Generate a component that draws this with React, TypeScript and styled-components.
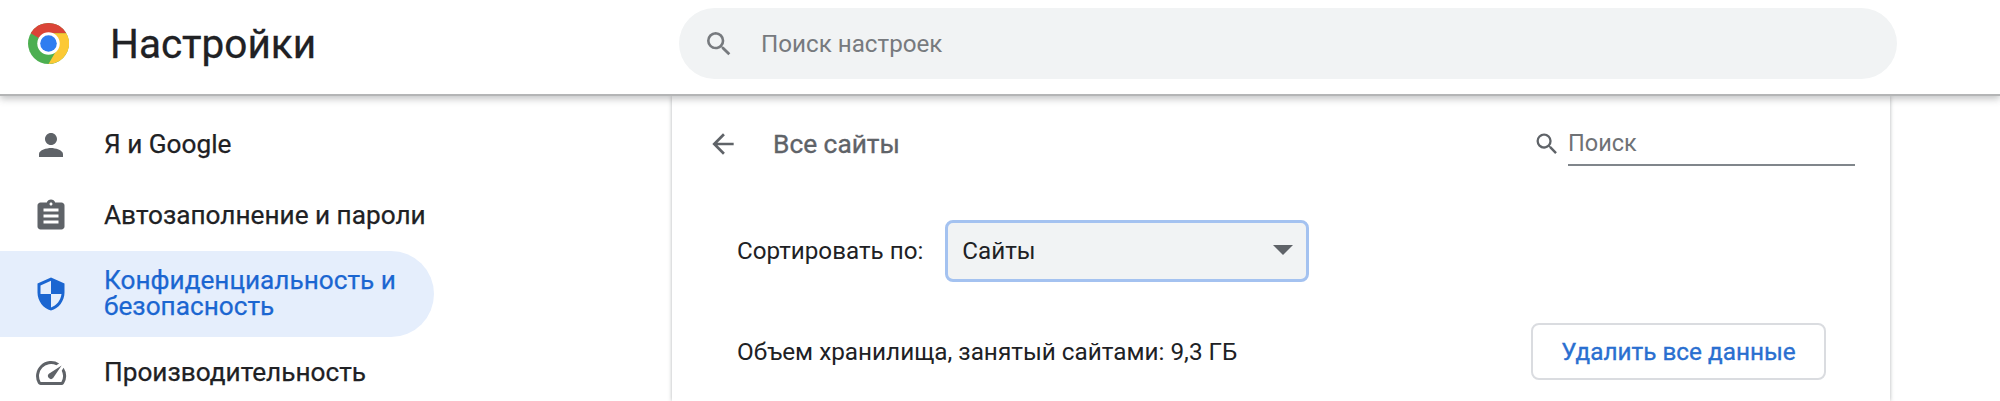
import React from 'react';
import styled, { createGlobalStyle } from 'styled-components';

const Global = createGlobalStyle`
  html, body { margin: 0; padding: 0; background: #fff; }
  body { font-family: Roboto, "Liberation Sans", sans-serif; }
  * { box-sizing: border-box; }
`;

const Page = styled.div`
  width: 2000px;
  height: 401px;
  overflow: hidden;
  background: #fff;
  display: flex;
  flex-direction: column;
`;
const Header = styled.header`
  position: relative;
  z-index: 2;
  height: 96px;
  flex: none;
  background: #fff;
  border-bottom: 2px solid #b4b5b6;
  box-shadow: 0 3px 7px rgba(60, 64, 67, 0.3);
  display: flex;
  align-items: flex-start;
  padding-top: 8px;
`;
const Brand = styled.div`
  width: 679px;
  height: 71px;
  flex: none;
  padding-left: 28px;
  display: flex;
  align-items: center;
  gap: 41px;
`;
const Title = styled.h1`
  margin: 0;
  font-size: 40.5px;
  font-weight: 400;
  line-height: 44px;
  color: #202124;
  -webkit-text-stroke: 0.3px #202124;
`;
const SearchBar = styled.div`
  width: 1218px;
  height: 71px;
  border-radius: 36px;
  background: #f1f3f4;
  display: flex;
  align-items: center;
  padding-left: 24px;
  gap: 26px;
  font-size: 24.2px;
  color: #777a7e;
`;
const Body = styled.div`
  flex: 1;
  display: flex;
  min-height: 0;
`;
const Sidebar = styled.nav`
  width: 672px;
  flex: none;
  padding-top: 13px;
`;
const NavRow = styled.div<{ $active?: boolean }>`
  width: 434px;
  height: ${p => (p.$active ? 86 : 71)}px;
  display: flex;
  align-items: center;
  gap: 35px;
  padding-left: 33px;
  border-radius: 0 43px 43px 0;
  background: ${p => (p.$active ? '#e5eefc' : 'transparent')};
  color: ${p => (p.$active ? '#1b66d1' : '#202124')};
  font-size: 26.2px;
  font-weight: 400;
  -webkit-text-stroke: 0.25px currentColor;
  line-height: 26px;
`;
const NavIcon = styled.svg`
  width: 36px;
  height: 36px;
  flex: none;
  fill: currentColor;
  stroke: none;
`;
const NavLabel = styled.span`
  padding-bottom: 2px;
`;
const Grey = styled.span`
  display: flex;
  color: #5f6368;
`;
const Card = styled.main`
  width: 1218px;
  flex: none;
  background: #fff;
  box-shadow: 0 0 4px rgba(60, 64, 67, 0.4);
  padding: 0 35px 0 65px;
`;
const SubHeader = styled.div`
  height: 96px;
  display: flex;
  align-items: center;
  color: #5f6368;
`;
const Back = styled.svg`
  width: 32px;
  height: 32px;
  fill: #5f6368;
  margin-left: -30px;
`;
const SubTitle = styled.h2`
  margin: 0 0 0 34px;
  font-size: 26.3px;
  font-weight: 400;
  -webkit-text-stroke: 0.35px #5f6368;
  flex: 1;
`;
const MiniSearch = styled.div`
  display: flex;
  align-items: center;
  gap: 7px;
`;
const MiniInput = styled.div`
  width: 287px;
  height: 44px;
  border-bottom: 2px solid #80868b;
  font-size: 23.5px;
  line-height: 42px;
  color: #6f7276;
`;
const SortRow = styled.div`
  display: flex;
  align-items: center;
  gap: 22px;
  margin-top: 28px;
  font-size: 24.2px;
  color: #202124;
`;
const Select = styled.div`
  width: 364px;
  height: 62px;
  border: 3px solid #a4c2f0;
  border-radius: 8px;
  background: #f1f3f4;
  display: flex;
  align-items: center;
  justify-content: space-between;
  padding: 0 13px 0 14px;
`;
const Caret = styled.span`
  width: 0;
  height: 0;
  border-left: 10px solid transparent;
  border-right: 10px solid transparent;
  border-top: 10px solid #5f6368;
  margin-top: -3px;
`;
const StorageRow = styled.div`
  display: flex;
  align-items: center;
  margin-top: 41px;
  font-size: 24.3px;
  color: #202124;
`;
const StorageText = styled.span`
  flex: 1;
`;
const Action = styled.button`
  width: 295px;
  height: 57px;
  margin-right: 29px;
  background: #fff;
  border: 2px solid #dadce0;
  border-radius: 8px;
  color: #2a6fd0;
  font: 400 24.3px Roboto, sans-serif;
  -webkit-text-stroke: 0.35px #2a6fd0;
  padding: 0;
`;

const Chrome = () => (
  <svg width="41" height="41" viewBox="3 3 42 42">
    <circle cx="24" cy="24" r="21" fill="#4caf50" />
    <path d="M24 3a21 21 0 0 1 18.2 10.5H24a10.5 10.5 0 0 0-9.1 5.25L5.8 13.5A21 21 0 0 1 24 3z" fill="#db4437" />
    <path d="M42.2 13.5A21 21 0 0 1 24 45l9.1-15.75a10.5 10.5 0 0 0 0-10.5L24 13.5z" fill="#fcc934" />
    <circle cx="24" cy="24" r="11.5" fill="#fff" />
    <circle cx="24" cy="24" r="8.5" fill="#2f7df0" />
  </svg>
);
const SearchIcon = ({ size, color }: { size: number; color: string }) => (
  <svg width={size} height={size} viewBox="0 0 24 24" fill={color}>
    <path d="M15.5 14h-.79l-.28-.27A6.47 6.47 0 0 0 16 9.5 6.5 6.5 0 1 0 9.5 16c1.61 0 3.09-.59 4.23-1.57l.27.28v.79l5 4.99L20.49 19l-4.99-5zm-6 0C7.01 14 5 11.99 5 9.5S7.01 5 9.5 5 14 7.01 14 9.5 11.99 14 9.5 14z" />
  </svg>
);

export default function App() {
  return (
    <Page>
      <Global />
      <Header>
        <Brand>
          <Chrome />
          <Title>Настройки</Title>
        </Brand>
        <SearchBar>
          <SearchIcon size={32} color="#777a7e" />
          <span>Поиск настроек</span>
        </SearchBar>
      </Header>
      <Body>
        <Sidebar>
          <NavRow>
            <Grey>
              <NavIcon viewBox="0 0 24 24"><path d="M12 12c2.21 0 4-1.79 4-4s-1.79-4-4-4-4 1.79-4 4 1.79 4 4 4zm0 2c-2.67 0-8 1.34-8 4v2h16v-2c0-2.66-5.33-4-8-4z" /></NavIcon>
            </Grey>
            <NavLabel>Я и Google</NavLabel>
          </NavRow>
          <NavRow>
            <Grey>
              <NavIcon viewBox="0 0 24 24"><path d="M19 3h-4.18C14.4 1.84 13.3 1 12 1s-2.4.84-2.82 2H5c-1.1 0-2 .9-2 2v14c0 1.1.9 2 2 2h14c1.1 0 2-.9 2-2V5c0-1.1-.9-2-2-2zm-7 0c.55 0 1 .45 1 1s-.45 1-1 1-1-.45-1-1 .45-1 1-1zm5 14H7v-2h10v2zm0-4H7v-2h10v2zm0-4H7V7h10v2z" /></NavIcon>
            </Grey>
            <NavLabel>Автозаполнение и пароли</NavLabel>
          </NavRow>
          <NavRow $active>
            <NavIcon viewBox="0 0 24 24"><path d="M12 1 3 5v6c0 5.55 3.84 10.74 9 12 5.16-1.26 9-6.45 9-12V5l-9-4zm0 10.99h7c-.53 4.12-3.28 7.79-7 8.94V12H5V6.3l7-3.11v8.8z" /></NavIcon>
            <NavLabel>Конфиденциальность и безопасность</NavLabel>
          </NavRow>
          <NavRow>
            <Grey>
              <NavIcon viewBox="0 0 24 24"><path d="m20.38 8.57-1.23 1.85a8 8 0 0 1-.22 7.58H5.07A8 8 0 0 1 15.58 6.85l1.85-1.23A10 10 0 0 0 3.35 19a2 2 0 0 0 1.72 1h13.85a2 2 0 0 0 1.74-1 10 10 0 0 0-.27-10.44z" /><path d="M10.59 15.41a2 2 0 0 0 2.83 0l5.66-8.49-8.49 5.66a2 2 0 0 0 0 2.83z" /></NavIcon>
            </Grey>
            <NavLabel>Производительность</NavLabel>
          </NavRow>
        </Sidebar>
        <Card>
          <SubHeader>
            <Back viewBox="0 0 24 24"><path d="M20 11H7.83l5.59-5.59L12 4l-8 8 8 8 1.41-1.41L7.83 13H20v-2z" /></Back>
            <SubTitle>Все сайты</SubTitle>
            <MiniSearch>
              <SearchIcon size={28} color="#5f6368" />
              <MiniInput>Поиск</MiniInput>
            </MiniSearch>
          </SubHeader>
          <SortRow>
            <span>Сортировать по:</span>
            <Select>
              <span>Сайты</span>
              <Caret />
            </Select>
          </SortRow>
          <StorageRow>
            <StorageText>Объем хранилища, занятый сайтами: 9,3 ГБ</StorageText>
            <Action>Удалить все данные</Action>
          </StorageRow>
        </Card>
      </Body>
    </Page>
  );
}
